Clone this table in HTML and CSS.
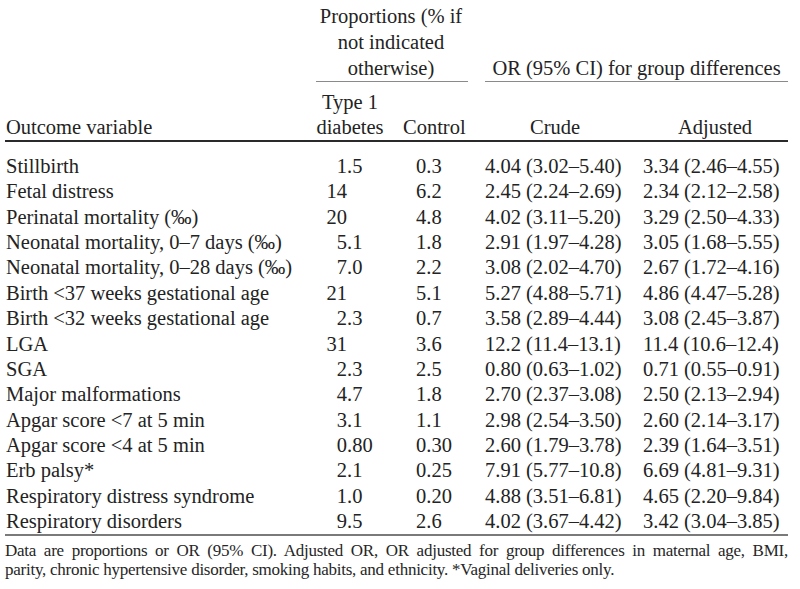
FILE: index.html
```html
<!DOCTYPE html>
<html lang="en">
<head>
<meta charset="utf-8">
<title>Outcomes table</title>
<link rel="stylesheet" href="styles.css">
</head>
<body>
<div class="page">
  <table class="outcomes">
    <colgroup>
      <col class="c-var">
      <col class="c-t1">
      <col class="c-ctl">
      <col class="c-gap">
      <col class="c-crude">
      <col class="c-adj">
    </colgroup>
    <thead>
      <tr class="hdr-top">
        <th></th>
        <th colspan="2" class="group group-prop">Proportions (% if<br>not indicated<br>otherwise)</th>
        <th></th>
        <th colspan="2" class="group group-or">OR (95% CI) for group differences</th>
      </tr>
      <tr class="hdr-sub">
        <th class="h-var">Outcome variable</th>
        <th class="h-t1">Type 1<br>diabetes</th>
        <th class="h-ctl">Control</th>
        <th></th>
        <th class="h-crude">Crude</th>
        <th class="h-adj">Adjusted</th>
      </tr>
    </thead>
    <tbody>
      <tr><td class="var">Stillbirth</td><td class="t1"><span class="int">1</span>.5</td><td class="ctl">0.3</td><td></td><td class="crude">4.04 (3.02–5.40)</td><td class="adj">3.34 (2.46–4.55)</td></tr>
      <tr><td class="var">Fetal distress</td><td class="t1"><span class="int">14</span></td><td class="ctl">6.2</td><td></td><td class="crude">2.45 (2.24–2.69)</td><td class="adj">2.34 (2.12–2.58)</td></tr>
      <tr><td class="var">Perinatal mortality (‰)</td><td class="t1"><span class="int">20</span></td><td class="ctl">4.8</td><td></td><td class="crude">4.02 (3.11–5.20)</td><td class="adj">3.29 (2.50–4.33)</td></tr>
      <tr><td class="var">Neonatal mortality, 0–7 days (‰)</td><td class="t1"><span class="int">5</span>.1</td><td class="ctl">1.8</td><td></td><td class="crude">2.91 (1.97–4.28)</td><td class="adj">3.05 (1.68–5.55)</td></tr>
      <tr><td class="var">Neonatal mortality, 0–28 days (‰)</td><td class="t1"><span class="int">7</span>.0</td><td class="ctl">2.2</td><td></td><td class="crude">3.08 (2.02–4.70)</td><td class="adj">2.67 (1.72–4.16)</td></tr>
      <tr><td class="var">Birth &lt;37 weeks gestational age</td><td class="t1"><span class="int">21</span></td><td class="ctl">5.1</td><td></td><td class="crude">5.27 (4.88–5.71)</td><td class="adj">4.86 (4.47–5.28)</td></tr>
      <tr><td class="var">Birth &lt;32 weeks gestational age</td><td class="t1"><span class="int">2</span>.3</td><td class="ctl">0.7</td><td></td><td class="crude">3.58 (2.89–4.44)</td><td class="adj">3.08 (2.45–3.87)</td></tr>
      <tr><td class="var">LGA</td><td class="t1"><span class="int">31</span></td><td class="ctl">3.6</td><td></td><td class="crude">12.2 (11.4–13.1)</td><td class="adj">11.4 (10.6–12.4)</td></tr>
      <tr><td class="var">SGA</td><td class="t1"><span class="int">2</span>.3</td><td class="ctl">2.5</td><td></td><td class="crude">0.80 (0.63–1.02)</td><td class="adj">0.71 (0.55–0.91)</td></tr>
      <tr><td class="var">Major malformations</td><td class="t1"><span class="int">4</span>.7</td><td class="ctl">1.8</td><td></td><td class="crude">2.70 (2.37–3.08)</td><td class="adj">2.50 (2.13–2.94)</td></tr>
      <tr><td class="var">Apgar score &lt;7 at 5 min</td><td class="t1"><span class="int">3</span>.1</td><td class="ctl">1.1</td><td></td><td class="crude">2.98 (2.54–3.50)</td><td class="adj">2.60 (2.14–3.17)</td></tr>
      <tr><td class="var">Apgar score &lt;4 at 5 min</td><td class="t1"><span class="int">0</span>.80</td><td class="ctl">0.30</td><td></td><td class="crude">2.60 (1.79–3.78)</td><td class="adj">2.39 (1.64–3.51)</td></tr>
      <tr><td class="var">Erb palsy*</td><td class="t1"><span class="int">2</span>.1</td><td class="ctl">0.25</td><td></td><td class="crude">7.91 (5.77–10.8)</td><td class="adj">6.69 (4.81–9.31)</td></tr>
      <tr><td class="var">Respiratory distress syndrome</td><td class="t1"><span class="int">1</span>.0</td><td class="ctl">0.20</td><td></td><td class="crude">4.88 (3.51–6.81)</td><td class="adj">4.65 (2.20–9.84)</td></tr>
      <tr><td class="var">Respiratory disorders</td><td class="t1"><span class="int">9</span>.5</td><td class="ctl">2.6</td><td></td><td class="crude">4.02 (3.67–4.42)</td><td class="adj">3.42 (3.04–3.85)</td></tr>
    </tbody>
  </table>
  <p class="note"><span class="note-first">Data are proportions or OR (95% CI). Adjusted OR, OR adjusted for group differences in maternal age, BMI,</span> parity, chronic hypertensive disorder, smoking habits, and ethnicity. *Vaginal deliveries only.</p>
</div>
</body>
</html>
```

FILE: styles.css
```css
html, body {
  margin: 0;
  padding: 0;
  background: #ffffff;
}

.page {
  padding: 3px 0 0 5px;
  width: 783px;
  color: #232323;
  font-family: "Liberation Serif", "Times New Roman", serif;
  font-size: 20.5px;
}

.outcomes {
  width: 783px;
  table-layout: fixed;
  border-collapse: collapse;
}

.c-var { width: 311px; }
.c-t1 { width: 80px; }
.c-ctl { width: 72px; }
.c-gap { width: 17px; }
.c-crude { width: 150px; }
.c-adj { width: 153px; }

.outcomes th,
.outcomes td {
  padding: 0;
  font-weight: normal;
  white-space: nowrap;
}

.outcomes .hdr-top th {
  line-height: 26px;
  vertical-align: bottom;
  text-align: center;
  padding-top: 0;
}

.outcomes .group {
  border-bottom: 1px solid #8a8a8a;
}

.outcomes .group-prop {
  padding-right: 2px;
}

.outcomes .hdr-sub th {
  line-height: 25px;
  vertical-align: bottom;
  padding-top: 8px;
  border-bottom: 2px solid #2a2a2a;
}

.outcomes .h-var { text-align: left; padding-left: 1px; }
.outcomes .h-t1 { text-align: center; padding-right: 12px; }
.outcomes .h-ctl { text-align: left; padding-left: 7px; }
.outcomes .h-crude { text-align: center; padding-right: 10px; }
.outcomes .h-adj { text-align: center; padding-left: 7px; }

.outcomes tbody td {
  line-height: 25.36px;
  vertical-align: middle;
}

.outcomes tbody tr:first-child td {
  padding-top: 12px;
}

.outcomes tbody tr:last-child td {
  border-bottom: 2px solid #7a7a7a;
}

.outcomes .var { text-align: left; padding-left: 1px; }

.outcomes .t1 { text-align: left; }
.outcomes .t1 .int {
  display: inline-block;
  width: 31px;
  text-align: right;
}

.outcomes .ctl { text-align: left; padding-left: 20px; }
.outcomes .crude { text-align: left; padding-left: 0; }
.outcomes .adj { text-align: left; padding-left: 8px; }

.note {
  margin: 5px 0 0 0;
  font-family: "Liberation Serif", "Times New Roman", serif;
  font-size: 17px;
  letter-spacing: -0.25px;
  line-height: 19px;
  text-align: left;
  color: #262626;
}

.note-first {
  display: block;
  text-align: justify;
  text-align-last: justify;
}
```
